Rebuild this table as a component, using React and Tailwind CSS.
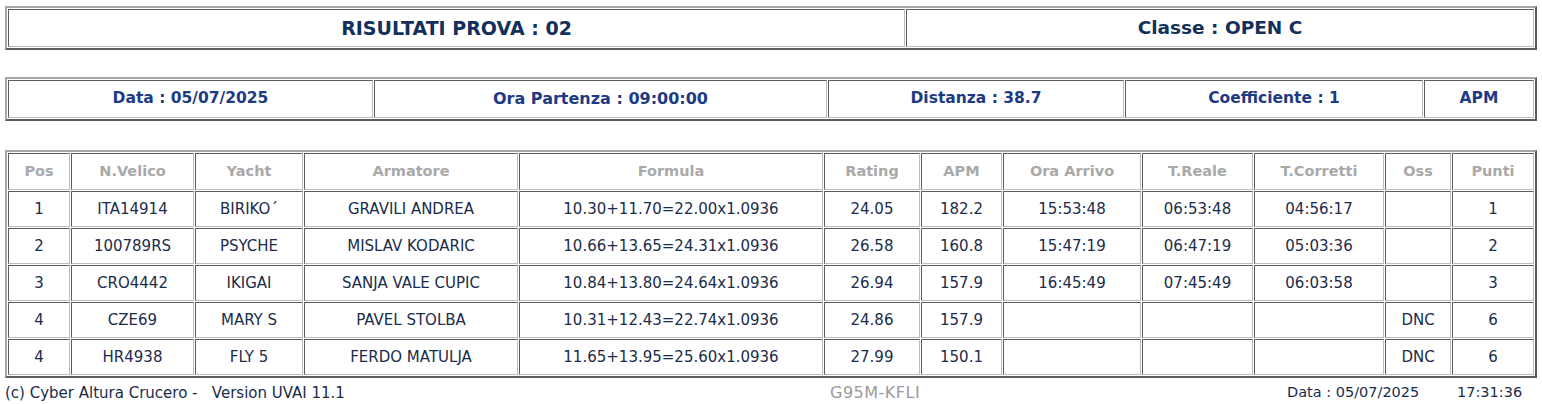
import React from 'react';

const font = { fontFamily: '"DejaVu Sans", Verdana, sans-serif' };

const outer = 'w-full table-fixed border-separate border-spacing-[1px] border-2 border-t-[#a6a6a6] border-l-[#a6a6a6] border-r-[#5c5c5c] border-b-[#5c5c5c]';
const cell = 'border border-t-[#5c5c5c] border-l-[#5c5c5c] border-r-[#bdbdbd] border-b-[#bdbdbd] text-center p-0';

const columns = [
    { label: 'Pos', w: 'w-[62px]' },
    { label: 'N.Velico', w: 'w-[123px]' },
    { label: 'Yacht', w: 'w-[108px]' },
    { label: 'Armatore', w: 'w-[214px]' },
    { label: 'Formula', w: 'w-[304px]' },
    { label: 'Rating', w: 'w-[96px]' },
    { label: 'APM', w: 'w-[81px]' },
    { label: 'Ora Arrivo', w: 'w-[138px]' },
    { label: 'T.Reale', w: 'w-[111px]' },
    { label: 'T.Corretti', w: 'w-[130px]' },
    { label: 'Oss', w: 'w-[66px]' },
    { label: 'Punti', w: '' },
];

const rows = [
    ['1', 'ITA14914', 'BIRIKO\u00B4', 'GRAVILI ANDREA', '10.30+11.70=22.00x1.0936', '24.05', '182.2', '15:53:48', '06:53:48', '04:56:17', '', '1'],
    ['2', '100789RS', 'PSYCHE', 'MISLAV KODARIC', '10.66+13.65=24.31x1.0936', '26.58', '160.8', '15:47:19', '06:47:19', '05:03:36', '', '2'],
    ['3', 'CRO4442', 'IKIGAI', 'SANJA VALE CUPIC', '10.84+13.80=24.64x1.0936', '26.94', '157.9', '16:45:49', '07:45:49', '06:03:58', '', '3'],
    ['4', 'CZE69', 'MARY S', 'PAVEL STOLBA', '10.31+12.43=22.74x1.0936', '24.86', '157.9', '', '', '', 'DNC', '6'],
    ['4', 'HR4938', 'FLY 5', 'FERDO MATULJA', '11.65+13.95=25.60x1.0936', '27.99', '150.1', '', '', '', 'DNC', '6'],
];

export default function App() {
    return (
        <div className="min-h-screen bg-white px-[5px] pt-[6px]" style={font}>
            {/* Titolo */}
            <table className={outer}>
                <tbody>
                    <tr className="font-bold text-[#12305a]">
                        <td className={`${cell} w-[897px] h-[38px] text-[19px]`}>RISULTATI PROVA : 02</td>
                        <td className={`${cell} h-[38px] text-[18.5px]`}>Classe : OPEN C</td>
                    </tr>
                </tbody>
            </table>

            {/* Info prova */}
            <table className={`${outer} mt-[27px]`}>
                <tbody>
                    <tr className="text-[15.5px] font-bold text-[#1d3b84]">
                        <td className={`${cell} w-[365px] h-[38px]`}>Data : 05/07/2025</td>
                        <td className={`${cell} w-[453px] text-[16px]`}>Ora Partenza : 09:00:00</td>
                        <td className={`${cell} w-[296px]`}>Distanza : 38.7</td>
                        <td className={`${cell} w-[298px]`}>Coefficiente : 1</td>
                        <td className={cell}>APM</td>
                    </tr>
                </tbody>
            </table>

            {/* Risultati */}
            <table className={`${outer} mt-[29px]`}>
                <thead>
                    <tr>
                        {columns.map((c) => (
                            <th key={c.label} className={`${cell} ${c.w} h-[37px] text-[14.5px] font-bold text-[#a9a9a9]`}>{c.label}</th>
                        ))}
                    </tr>
                </thead>
                <tbody>
                    {rows.map((r, i) => (
                        <tr key={i} className="text-[15px] text-[#1b2c4a]">
                            {r.map((v, j) => (
                                <td key={j} className={`${cell} h-[36px]`}>{v}</td>
                            ))}
                        </tr>
                    ))}
                </tbody>
            </table>

            {/* Footer */}
            <div className="flex items-center h-[30px] text-[14.5px] text-[#1b2c4a]">
                <div className="w-[825px] whitespace-pre text-[15px]">(c) Cyber Altura Crucero -   Version UVAI 11.1</div>
                <div className="w-[457px] text-[16px] tracking-[0.5px] text-[#9a9a9a]">G95M-KFLI</div>
                <div className="w-[170px]">Data : 05/07/2025</div>
                <div>17:31:36</div>
            </div>
        </div>
    );
}
